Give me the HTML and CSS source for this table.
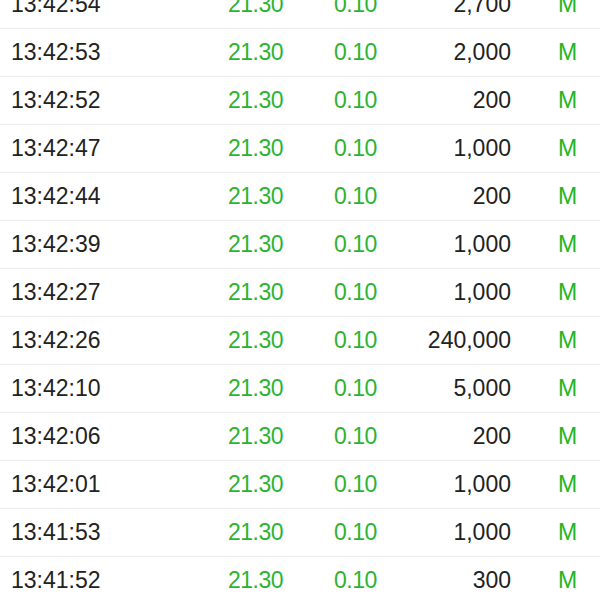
FILE: index.html
```html
<!DOCTYPE html>
<html>
<head>
<meta charset="utf-8">
<link rel="stylesheet" href="styles.css">
</head>
<body>
<div class="list">
  <div class="row"><span class="time">13:42:54</span><span class="price">21.30</span><span class="chg">0.10</span><span class="vol">2,700</span><span class="flag">M</span></div>
  <div class="row"><span class="time">13:42:53</span><span class="price">21.30</span><span class="chg">0.10</span><span class="vol">2,000</span><span class="flag">M</span></div>
  <div class="row"><span class="time">13:42:52</span><span class="price">21.30</span><span class="chg">0.10</span><span class="vol">200</span><span class="flag">M</span></div>
  <div class="row"><span class="time">13:42:47</span><span class="price">21.30</span><span class="chg">0.10</span><span class="vol">1,000</span><span class="flag">M</span></div>
  <div class="row"><span class="time">13:42:44</span><span class="price">21.30</span><span class="chg">0.10</span><span class="vol">200</span><span class="flag">M</span></div>
  <div class="row"><span class="time">13:42:39</span><span class="price">21.30</span><span class="chg">0.10</span><span class="vol">1,000</span><span class="flag">M</span></div>
  <div class="row"><span class="time">13:42:27</span><span class="price">21.30</span><span class="chg">0.10</span><span class="vol">1,000</span><span class="flag">M</span></div>
  <div class="row"><span class="time">13:42:26</span><span class="price">21.30</span><span class="chg">0.10</span><span class="vol">240,000</span><span class="flag">M</span></div>
  <div class="row"><span class="time">13:42:10</span><span class="price">21.30</span><span class="chg">0.10</span><span class="vol">5,000</span><span class="flag">M</span></div>
  <div class="row"><span class="time">13:42:06</span><span class="price">21.30</span><span class="chg">0.10</span><span class="vol">200</span><span class="flag">M</span></div>
  <div class="row"><span class="time">13:42:01</span><span class="price">21.30</span><span class="chg">0.10</span><span class="vol">1,000</span><span class="flag">M</span></div>
  <div class="row"><span class="time">13:41:53</span><span class="price">21.30</span><span class="chg">0.10</span><span class="vol">1,000</span><span class="flag">M</span></div>
  <div class="row"><span class="time">13:41:52</span><span class="price">21.30</span><span class="chg">0.10</span><span class="vol">300</span><span class="flag">M</span></div>
</div>
</body>
</html>
```
FILE: styles.css
```css
html, body {
  margin: 0;
  padding: 0;
  background: #ffffff;
  overflow: hidden;
}
.list {
  margin-top: -19px;
  font-family: "Liberation Sans", Arial, sans-serif;
  font-size: 23px;
  color: #222222;
}
.row {
  display: grid;
  grid-template-columns: 150px 122px 111px 117px 1fr;
  align-items: center;
  height: 48px;
  box-sizing: border-box;
  padding-left: 11px;
  border-bottom: 1px solid #ededed;
}
.price {
  text-align: right;
  color: #2fb22f;
  letter-spacing: -0.5px;
}
.chg {
  padding-left: 51px;
  color: #2fb22f;
  letter-spacing: -0.5px;
}
.vol {
  text-align: right;
}
.flag {
  padding-left: 47px;
  color: #1fb51f;
}
```
